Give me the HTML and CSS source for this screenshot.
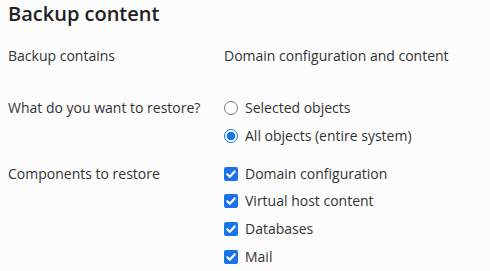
FILE: index.html
```html
<!DOCTYPE html>
<html>
<head>
<meta charset="utf-8">
<link rel="stylesheet" href="styles.css">
</head>
<body>
<div class="page">
  <h2 class="title">Backup content</h2>
  <div class="form">
    <div class="row">
      <div class="label">Backup contains</div>
      <div class="value">Domain configuration and content</div>
    </div>
    <div class="row row-restore">
      <div class="label">What do you want to restore?</div>
      <div class="options">
        <label class="opt"><span class="radio"></span>Selected objects</label>
        <label class="opt"><span class="radio on"></span>All objects (entire system)</label>
      </div>
    </div>
    <div class="row row-components">
      <div class="label">Components to restore</div>
      <div class="options">
        <label class="opt"><span class="check"><svg viewBox="0 0 14 14" width="14" height="14"><path d="M3.3 7.3 L5.8 9.8 L10.7 4.5" fill="none" stroke="#fff" stroke-width="2.2" stroke-linecap="round" stroke-linejoin="round"/></svg></span>Domain configuration</label>
        <label class="opt"><span class="check"><svg viewBox="0 0 14 14" width="14" height="14"><path d="M3.3 7.3 L5.8 9.8 L10.7 4.5" fill="none" stroke="#fff" stroke-width="2.2" stroke-linecap="round" stroke-linejoin="round"/></svg></span>Virtual host content</label>
        <label class="opt"><span class="check"><svg viewBox="0 0 14 14" width="14" height="14"><path d="M3.3 7.3 L5.8 9.8 L10.7 4.5" fill="none" stroke="#fff" stroke-width="2.2" stroke-linecap="round" stroke-linejoin="round"/></svg></span>Databases</label>
        <label class="opt"><span class="check"><svg viewBox="0 0 14 14" width="14" height="14"><path d="M3.3 7.3 L5.8 9.8 L10.7 4.5" fill="none" stroke="#fff" stroke-width="2.2" stroke-linecap="round" stroke-linejoin="round"/></svg></span>Mail</label>
      </div>
    </div>
  </div>
</div>
</body>
</html>
```
FILE: styles.css
```css
html, body {
  margin: 0;
  padding: 0;
  background: #fcfcfc;
}
body {
  font-family: "Open Sans", sans-serif;
  color: #222;
  font-size: 14px;
}
.page {
  padding: 0 8px;
}
.title {
  margin: 0;
  font-size: 20px;
  font-weight: 600;
  line-height: 28px;
  color: #222;
}
.form {
  display: flex;
  flex-direction: column;
  margin-top: 18px;
}
.row {
  display: flex;
}
.row-restore {
  margin-top: 32px;
}
.row-components {
  margin-top: 18px;
}
.label {
  width: 216px;
  line-height: 20px;
  color: #333;
}
.value {
  line-height: 20px;
  color: #333;
}
.options {
  display: flex;
  flex-direction: column;
  gap: 7.7px;
}
.opt {
  display: flex;
  align-items: center;
  line-height: 20px;
  color: #333;
}
.radio {
  width: 12px;
  height: 12px;
  border: 1px solid #777;
  border-radius: 50%;
  margin-right: 7px;
  background: #fff;
}
.radio.on {
  border-color: #1a73e8;
  background: radial-gradient(circle, #1a73e8 0 4px, #fff 4.5px);
}
.check {
  width: 14px;
  height: 14px;
  border-radius: 2px;
  background: #1a73e8;
  margin-right: 7px;
  display: flex;
}
```
